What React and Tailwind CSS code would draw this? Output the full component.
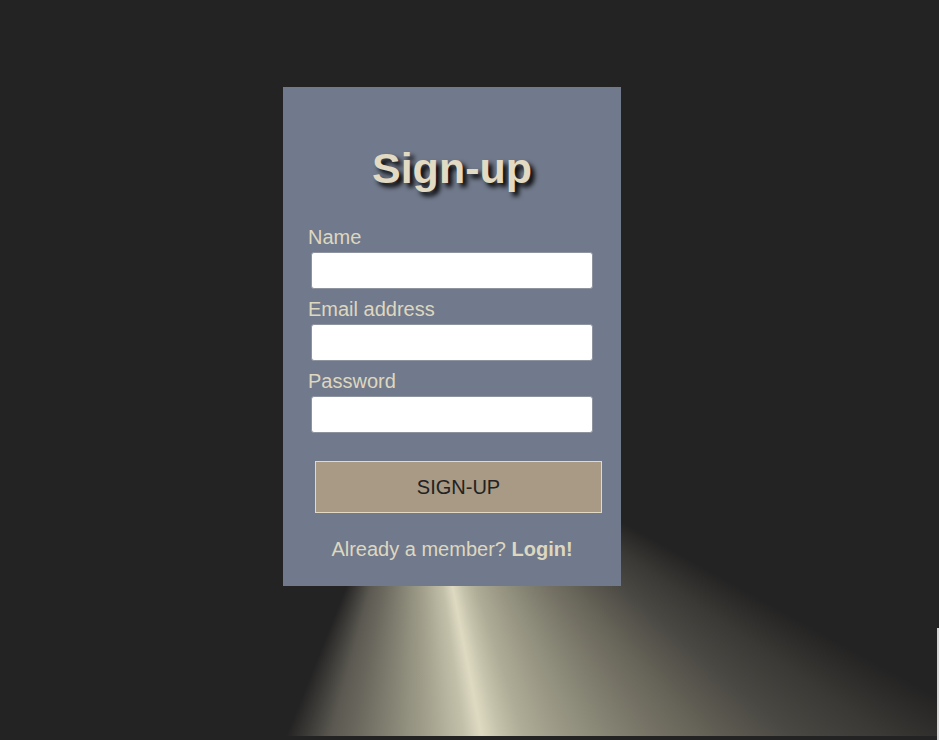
import React from "react";

function Field({ label, type = "text" }) {
  return (
    <div className="flex flex-col">
      <label className="text-[20px] leading-[23px] text-[#ded7bf]">{label}</label>
      <input
        type={type}
        className="mt-[3px] ml-[3px] w-[282px] h-[37px] bg-white border border-[#8e93a0] rounded-[3px] outline-none px-2 text-[16px] text-black"
      />
    </div>
  );
}

export default function App() {
  return (
    <div className="relative h-[740px] w-full overflow-hidden bg-[#242323] font-['Liberation_Sans',Arial,sans-serif]">
      {/* light beam behind the card */}
      <div className="absolute left-0 top-0 w-[937px] h-[736px] bg-[conic-gradient(from_0deg_at_418px_409px,#24232300_0deg,#24232300_119deg,#3a3935_125deg,#4a4843_131deg,#666358_139deg,#8a8877_151deg,#aeab96_162deg,#c6c3ac_166deg,#dedac2_169deg,#c3c0aa_172deg,#a9a792_177deg,#8d8b7a_183deg,#6e6c61_190deg,#5a5850_195deg,#3a3936_199deg,#24232300_202deg,#24232300_360deg)]" />
      <div className="absolute right-0 top-[628px] w-[2px] h-[112px] bg-[#d6d6d6]" />

      <div className="relative ml-[283px] pt-[87px]">
        <div className="w-[338px] h-[499px] bg-[#717a8c] pt-[56px] px-[25px] flex flex-col">
          <h1 className="text-[43px] leading-[50px] font-bold text-center text-[#e2dac2] [text-shadow:4px_4px_5px_#000] -mx-[25px]">
            Sign-up
          </h1>
          <form className="mt-[33px] flex flex-col gap-[9px]" onSubmit={(e) => e.preventDefault()}>
            <Field label="Name" />
            <Field label="Email address" type="email" />
            <Field label="Password" type="password" />
          </form>
          <button className="mt-[28px] ml-[7px] w-[287px] h-[52px] bg-[#a89a85] border border-[#e2dac2] text-[20px] text-[#222222]">
            SIGN-UP
          </button>
          <p className="mt-[25px] -mx-[25px] text-center text-[20px] leading-[23px] text-[#ded7bf]">
            Already a member? <span className="font-bold">Login!</span>
          </p>
        </div>
      </div>
    </div>
  );
}
